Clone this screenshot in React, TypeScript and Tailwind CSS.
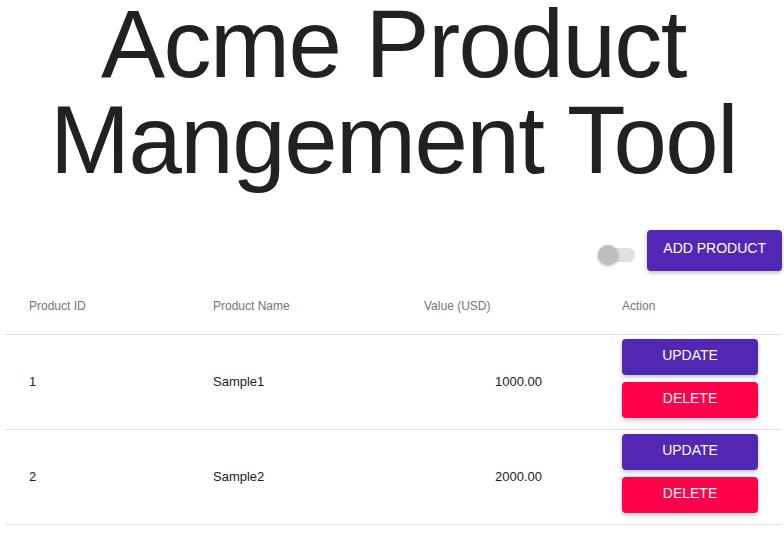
import { useState } from "react";

const products = [
  { id: 1, name: "Sample1", value: 1000 },
  { id: 2, name: "Sample2", value: 2000 },
];

const App = () => {
  const [checked, setChecked] = useState(false);

  return (
    <div className="min-h-screen bg-white pl-[5px] pr-[2px] pt-px font-['Liberation_Sans',Arial,sans-serif] text-[#212121]">
      <h1 className="-mt-[5px] text-center text-[96px] leading-[96px] tracking-[-1.5px] font-normal">
        Acme Product Mangement Tool
      </h1>

      <div className="mt-[42px] flex items-start justify-end">
        {/* switch */}
        <button
          onClick={() => setChecked(!checked)}
          className="relative mt-[6px] h-[38px] w-[58px]"
        >
          <span className="absolute left-[12px] top-[12px] h-[14px] w-[34px] rounded-full bg-[#e0e0e0]" />
          <span className="absolute left-[9px] top-[9px] h-[20px] w-[20px] rounded-full bg-[#bdbdbd] shadow-[0_1px_3px_rgba(0,0,0,0.3)]" />
        </button>
        <button className="h-[41px] rounded bg-[#5227b4] px-4 pb-[4px] text-[14px] text-white shadow-[0_2px_4px_rgba(0,0,0,0.25)]">
          ADD PRODUCT
        </button>
      </div>

      <table className="mt-[4px] w-full border-collapse text-left">
        <thead>
          <tr className="h-[56px] border-b border-[#e0e0e0] text-[12px] text-[#757575]">
            <th className="w-[184px] pl-6 font-normal">Product ID</th>
            <th className="w-[211px] pl-6 font-normal">Product Name</th>
            <th className="w-[198px] pl-6 font-normal">Value (USD)</th>
            <th className="pl-6 font-normal">Action</th>
          </tr>
        </thead>
        <tbody className="text-[13px] text-[#212121]">
          {products.map((p) => (
            <tr key={p.id} className="border-b border-[#e0e0e0]">
              <td className="pl-6">{p.id}</td>
              <td className="pl-6">{p.name}</td>
              <td className="pr-14 text-right">{p.value.toFixed(2)}</td>
              <td className="py-1 pl-6 pr-6">
                <button className="mb-[7px] block h-[36px] w-full rounded bg-[#5227b4] pb-[2px] text-[14px] text-white shadow-[0_2px_4px_rgba(0,0,0,0.25)]">
                  UPDATE
                </button>
                <button className="mb-[7px] block h-[36px] w-full rounded bg-[#ff0049] pb-[2px] text-[14px] text-white shadow-[0_2px_4px_rgba(0,0,0,0.25)]">
                  DELETE
                </button>
              </td>
            </tr>
          ))}
        </tbody>
      </table>
    </div>
  );
};

export default App;
